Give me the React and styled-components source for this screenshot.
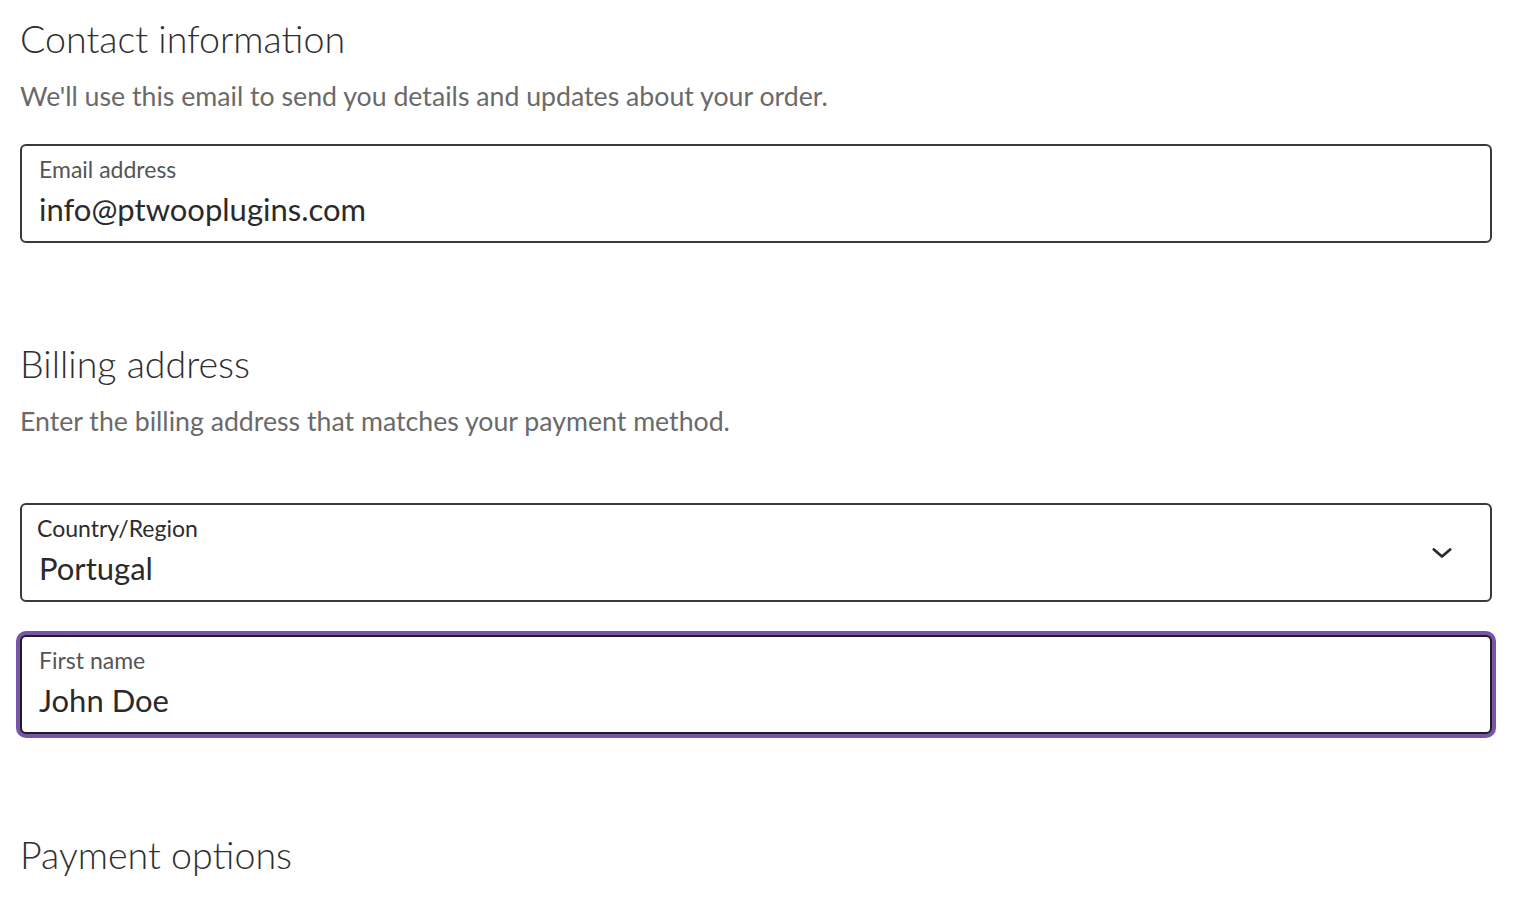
import styled, { createGlobalStyle } from 'styled-components';

const GlobalStyle = createGlobalStyle`
  html, body {
    margin: 0;
    padding: 0;
    background: #ffffff;
  }
  body {
    font-family: Lato, "Open Sans", "Liberation Sans", sans-serif;
    color: #2c2c2c;
  }
`;

function Field({ label, value, focused = false, select = false }) {
  return (
    <FieldBox $focused={focused}>
      <FieldText>
        <FieldLabel $select={select}>{label}</FieldLabel>
        <FieldValue>{value}</FieldValue>
      </FieldText>
      {select && (
        <Chevron viewBox="0 0 24 24" aria-hidden="true">
          <path d="M5 9l7 6 7-6" fill="none" stroke="#2a2a2a" strokeWidth="2.4" strokeLinecap="round" strokeLinejoin="round" />
        </Chevron>
      )}
    </FieldBox>
  );
}

export default function App() {
  return (
    <>
      <GlobalStyle />
      <Page>
        <Section>
          <Heading>Contact information</Heading>
          <Description>We'll use this email to send you details and updates about your order.</Description>
          <Fields $top={30}>
            <Field label="Email address" value="info@ptwooplugins.com" />
          </Fields>
        </Section>

        <Section>
          <Heading>Billing address</Heading>
          <Description>Enter the billing address that matches your payment method.</Description>
          <Fields $top={64}>
            <Field label="Country/Region" value="Portugal" select />
            <Field label="First name" value="John Doe" focused />
          </Fields>
        </Section>

        <Section>
          <Heading>Payment options</Heading>
        </Section>
      </Page>
    </>
  );
}

const Page = styled.main`
  display: flex;
  flex-direction: column;
  gap: 94px;
  padding: 12px 28px 0 20px;
`;

const Section = styled.section`
  display: flex;
  flex-direction: column;
`;

const Heading = styled.h2`
  margin: 0;
  font-size: 37.6px;
  font-weight: 300;
  line-height: 54px;
  color: #2f2f2f;
`;

const Description = styled.p`
  margin: 12px 0 0;
  font-size: 26.7px;
  line-height: 36px;
  color: #6a6a6a;
`;

const Fields = styled.div`
  display: flex;
  flex-direction: column;
  gap: 33px;
  margin-top: ${(p) => p.$top}px;
`;

const FieldBox = styled.div`
  display: flex;
  align-items: center;
  justify-content: space-between;
  height: 99px;
  box-sizing: border-box;
  padding: 0 34px 5px 17px;
  border: 2px solid ${(p) => (p.$focused ? '#1e1e24' : '#3a3a3a')};
  border-radius: 6px;
  background: #fff;
  box-shadow: ${(p) => (p.$focused ? '0 0 0 4px #7756aa' : 'none')};
`;

const FieldText = styled.div`
  display: flex;
  flex-direction: column;
`;

const FieldLabel = styled.span`
  font-size: 23px;
  line-height: 28px;
  color: ${(p) => (p.$select ? '#2c2c2c' : '#555555')};
  margin-left: ${(p) => (p.$select ? '-2px' : '0')};
`;

const FieldValue = styled.span`
  margin-top: 8px;
  font-size: 31px;
  line-height: 36px;
  color: #2a2a2a;
`;

const Chevron = styled.svg`
  width: 28px;
  height: 28px;
  margin-top: 5px;
`;
